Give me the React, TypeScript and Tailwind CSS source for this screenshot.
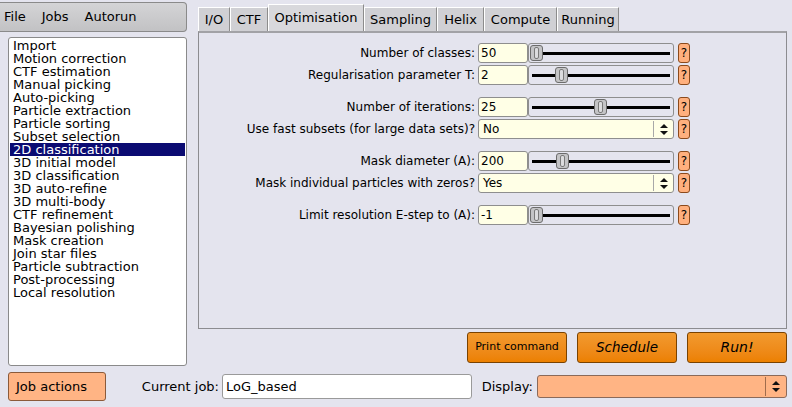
import React from "react";

const jobs = [
  "Import",
  "Motion correction",
  "CTF estimation",
  "Manual picking",
  "Auto-picking",
  "Particle extraction",
  "Particle sorting",
  "Subset selection",
  "2D classification",
  "3D initial model",
  "3D classification",
  "3D auto-refine",
  "3D multi-body",
  "CTF refinement",
  "Bayesian polishing",
  "Mask creation",
  "Join star files",
  "Particle subtraction",
  "Post-processing",
  "Local resolution",
];

const tabs = [
  { name: "I/O", w: "w-[32px]" },
  { name: "CTF", w: "w-[38px]" },
  { name: "Optimisation", w: "w-[96px]", active: true },
  { name: "Sampling", w: "w-[73px]" },
  { name: "Helix", w: "w-[47px]" },
  { name: "Compute", w: "w-[73px]" },
  { name: "Running", w: "w-[62px]" },
];

type Row = { label: string; kind: "slider" | "select"; value: string; thumb?: string; mt: string };

const rows: Row[] = [
  { label: "Number of classes:", kind: "slider", value: "50", thumb: "left-[1px]", mt: "mt-0" },
  { label: "Regularisation parameter T:", kind: "slider", value: "2", thumb: "left-[26px]", mt: "mt-[2px]" },
  { label: "Number of iterations:", kind: "slider", value: "25", thumb: "left-[65px]", mt: "mt-[12px]" },
  { label: "Use fast subsets (for large data sets)?", kind: "select", value: "No", mt: "mt-[2px]" },
  { label: "Mask diameter (A):", kind: "slider", value: "200", thumb: "left-[27px]", mt: "mt-[12px]" },
  { label: "Mask individual particles with zeros?", kind: "select", value: "Yes", mt: "mt-[2px]" },
  { label: "Limit resolution E-step to (A):", kind: "slider", value: "-1", thumb: "left-[1px]", mt: "mt-[12px]" },
];

function Arrows() {
  return (
    <svg width="8" height="11" viewBox="0 0 8 11">
      <polygon points="0,4 4,0 8,4" fill="#111" />
      <polygon points="0,7 8,7 4,11" fill="#111" />
    </svg>
  );
}

function HelpButton() {
  return (
    <div className="ml-[4px] w-[12px] h-full bg-[#ffb07e] border border-[#8b4a1c] rounded-[3px] flex items-center justify-center text-[12px] leading-none">
      ?
    </div>
  );
}

function FormRow({ row }: { row: Row }) {
  return (
    <div className={`flex h-[20px] items-stretch ${row.mt}`}>
      <div className="w-[279px] pr-[3px] text-right text-[12px] leading-[20px] whitespace-nowrap">{row.label}</div>
      {row.kind === "slider" ? (
        <>
          <div className="w-[50px] h-full bg-[#ffffe6] border border-[#8e8e8e] rounded-[3px] pl-[2px] flex items-center text-[12px]">
            {row.value}
          </div>
          <div className="relative w-[146px] h-full border border-[#8e8e8e] rounded-[3px] flex items-center px-[3px]">
            <div className="h-[3px] w-full bg-black" />
            <div
              className={`absolute top-[1px] ${row.thumb} w-[13px] h-[16px] bg-[#c4c4c6] border border-[#6c6c6c] rounded-[3px] flex items-center justify-center`}
            >
              <div className="w-[5px] h-[12px] border border-[#7a7a7a] rounded-[2px] bg-[#dcdcde]" />
            </div>
          </div>
        </>
      ) : (
        <div className="w-[196px] h-full bg-[#ffffe6] border border-[#8e8e8e] rounded-[3px] flex items-center">
          <div className="flex-1 pl-[4px] text-[12px]">{row.value}</div>
          <div className="w-[20px] h-[16px] border-l border-[#a8a8a8] flex items-center justify-center">
            <Arrows />
          </div>
        </div>
      )}
      <HelpButton />
    </div>
  );
}

export default function App() {
  return (
    <div className="w-[792px] h-[407px] bg-[#e4e4ee] text-black font-['DejaVu_Sans',sans-serif] overflow-hidden flex flex-col">
      <div className="flex h-[368px]">
        {/* left column */}
        <div className="w-[198px] flex flex-col">
          <div className="mt-[2px] w-[187px] h-[30px] bg-gradient-to-b from-[#d4d4d6] to-[#c2c2c4] border border-l-0 border-[#8a8a8a] rounded-r-[4px] flex items-center gap-[16px] pl-[4px] text-[13px]">
            <span>File</span>
            <span>Jobs</span>
            <span>Autorun</span>
          </div>
          <div className="mt-[5px] ml-[8px] w-[179px] h-[329px] bg-white border border-[#8a8a8a] rounded-[3px] p-[1px] pt-[1px] text-[13px] leading-[13px]">
            {jobs.map((j) => (
              <div
                key={j}
                className={
                  j === "2D classification"
                    ? "h-[13px] pl-[3px] bg-[#0b0b72] text-white whitespace-nowrap"
                    : "h-[13px] pl-[3px] whitespace-nowrap"
                }
              >
                {j}
              </div>
            ))}
          </div>
        </div>

        {/* right column */}
        <div className="flex-1 flex flex-col">
          <div className="h-[31px] flex items-end text-[13px]">
            {tabs.map((t) =>
              t.active ? (
                <div
                  key={t.name}
                  className={`${t.w} h-[27px] bg-[#d8d8dc] border-t border-l border-white border-r border-r-[#8c8c8c] flex items-center justify-center`}
                >
                  {t.name}
                </div>
              ) : (
                <div
                  key={t.name}
                  className={`${t.w} h-[24px] bg-[#d0d0d4] border-t border-l border-white border-r border-r-[#8c8c8c] flex items-center justify-center`}
                >
                  {t.name}
                </div>
              )
            )}
          </div>
          <div className="w-[589px] h-[298px] border-t-[2px] border-t-[#a2a2a6] border-l border-r border-b border-[#8c8c90] bg-[#e4e4ee] pt-[10px]">
            {rows.map((r) => (
              <FormRow key={r.label} row={r} />
            ))}
          </div>
          <div className="mt-[3px] flex justify-end gap-[10px] pr-[5px]">
            <div className="w-[100px] h-[31px] bg-gradient-to-b from-[#f29a2e] to-[#ec8000] border border-[#7a4200] rounded-[3px] flex items-center justify-center text-[11px]">
              Print command
            </div>
            <div className="w-[100px] h-[31px] bg-gradient-to-b from-[#f29a2e] to-[#ec8000] border border-[#7a4200] rounded-[3px] flex items-center justify-center text-[13.5px] italic">
              Schedule
            </div>
            <div className="w-[100px] h-[31px] bg-gradient-to-b from-[#f29a2e] to-[#ec8000] border border-[#7a4200] rounded-[3px] flex items-center justify-center text-[14px] italic">
              Run!
            </div>
          </div>
        </div>
      </div>

      {/* bottom row */}
      <div className="h-[39px] flex items-start pt-[4px]">
        <div className="ml-[8px] w-[98px] h-[29px] bg-[#ffb484] border border-[#8b5a3a] rounded-[3px] flex items-center pl-[7px] text-[13px]">
          Job actions
        </div>
        <div className="flex items-center h-[29px]">
          <div className="w-[116px] pr-[3px] text-right text-[13px]">Current job:</div>
          <div className="w-[250px] h-[25px] bg-white border border-[#9a9a9a] rounded-[3px] pl-[3px] flex items-center text-[13px]">
            LoG_based
          </div>
          <div className="w-[65px] pr-[4px] text-right text-[13px]">Display:</div>
          <div className="w-[250px] h-[23px] bg-[#ffb484] border border-[#8b6a5a] rounded-[3px] flex items-center justify-end">
            <div className="w-[21px] h-[19px] border-l border-[#a06c4c] flex items-center justify-center">
              <Arrows />
            </div>
          </div>
        </div>
      </div>
    </div>
  );
}
